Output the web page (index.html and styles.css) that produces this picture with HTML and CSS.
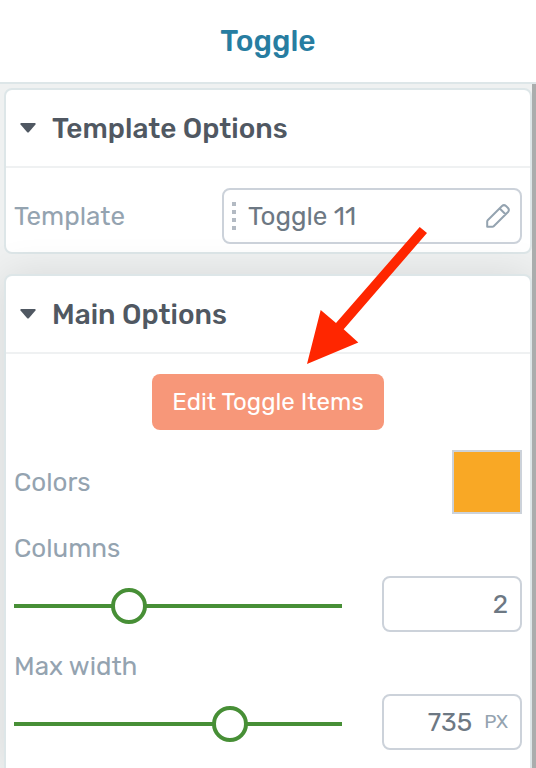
FILE: index.html
```html
<!DOCTYPE html>
<html lang="en">
<head>
    <meta charset="UTF-8">
    <meta name="viewport" content="width=device-width, initial-scale=1.0">
    <title>Toggle</title>
    <link rel="stylesheet" href="styles.css">
</head>
<body>
    <header class="header">
        <h1>Toggle</h1>
    </header>
    <div class="main">
        <div class="panel">
            <section class="card">
                <h2 class="card-head">
                    <svg class="caret" viewBox="0 0 16 10" aria-hidden="true"><path d="M1 0h14q1.200 .6 .5 1.600L9 9q-1 1-2 0L.5 1.600Q-.2.600 1 0z"/></svg>
                    Template Options
                </h2>
                <div class="card-body">
                    <div class="row">
                        <label for="template">Template</label>
                        <div class="field template-field">
                            <span class="handle"><i></i><i></i><i></i><i></i></span>
                            <input type="text" id="template" value="Toggle 11">
                            <button type="button" class="edit" aria-label="Edit template">
                                <svg viewBox="0 0 24 24"><path d="M1.200 22.800V17.600q0-.8.5-1.300L16 2q2-1.700 4 0l2 2q1.700 2 0 4L7.700 22.300q-.5.500-1.300.5zM13.700 4.500l5.800 5.800"/></svg>
                            </button>
                        </div>
                    </div>
                </div>
            </section>

            <section class="card card-main">
                <h2 class="card-head">
                    <svg class="caret" viewBox="0 0 16 10" aria-hidden="true"><path d="M1 0h14q1.200 .6 .5 1.600L9 9q-1 1-2 0L.5 1.600Q-.2.600 1 0z"/></svg>
                    Main Options
                </h2>
                <div class="card-body">
                    <button type="button" class="edit-items">Edit Toggle Items</button>
                    <div class="row">
                        <label for="color">Colors</label>
                        <input type="color" id="color" class="swatch" value="#f9a825">
                    </div>
                    <div class="option">
                        <label for="columns">Columns</label>
                        <div class="control">
                            <input type="range" class="slider" min="1" max="4" value="2" aria-label="Columns slider">
                            <div class="field number-field">
                                <input type="number" id="columns" value="2">
                            </div>
                        </div>
                    </div>
                    <div class="option">
                        <label for="maxwidth">Max width</label>
                        <div class="control">
                            <input type="range" class="slider" min="0" max="1085" value="735" aria-label="Max width slider">
                            <div class="field number-field">
                                <input type="number" id="maxwidth" value="735">
                                <span class="unit">PX</span>
                            </div>
                        </div>
                    </div>
                </div>
            </section>
        </div>
        <div class="scrollbar"></div>
    </div>
    <!-- arrow pointing at the edit button -->
    <svg class="arrow" viewBox="0 0 120 137" aria-hidden="true"><polygon points="112.700,0 120,6 36.700,102.300 51.300,115.600 0,137 13.700,83 29,96"/></svg>
</body>
</html>
```

FILE: styles.css
```css
* {
    box-sizing: border-box;
}

body {
    margin: 0;
    min-height: 100vh;
    display: flex;
    flex-direction: column;
    position: relative;
    font-family: Rubik, Roboto, sans-serif;
    font-size: 26px;
    color: #94a3b0;
    background-color: #eff1f1;
}

input,
button {
    font: inherit;
    margin: 0;
    padding: 0;
    border: none;
    background: none;
}

.header {
    height: 84px;
    display: flex;
    align-items: center;
    justify-content: center;
    background-color: #fff;
    border-bottom: 2px solid #dde6e8;
}

h1 {
    margin: 0;
    font-size: 30px;
    font-weight: 500;
    color: #277da1;
}

.main {
    flex: 1;
    display: flex;
}

.panel {
    flex: 1;
    display: flex;
    flex-direction: column;
    gap: 20px;
    padding: 4px 0 0 4px;
    overflow: hidden;
}

.scrollbar {
    width: 4px;
    background-color: #aaadad;
}

.card {
    background-color: #fff;
    border: 2px solid #dde6e8;
    border-radius: 8px;
}

/* last card runs down to the bottom of the window */
.card-main {
    flex: 1;
    position: relative;
    border-bottom: none;
    border-radius: 8px 8px 0 0;
    box-shadow: 0 0 40px rgba(0, 0, 0, 0.1);
}

.card-head {
    height: 78px;
    margin: 0;
    padding-left: 14px;
    display: flex;
    align-items: center;
    gap: 16px;
    font-size: 28px;
    font-weight: 500;
    color: #505862;
    border-bottom: 2px solid #eff1f2;
}

.caret {
    width: 16px;
    height: 10px;
    fill: #505862;
}

.card-body {
    display: flex;
    flex-direction: column;
    gap: 20px;
    padding: 20px 8px 8px;
}

.row {
    display: flex;
    align-items: center;
    justify-content: space-between;
}

.field {
    height: 56px;
    display: flex;
    align-items: center;
    border: 2px solid #ccd2da;
    border-radius: 8px;
    color: #6d7883;
}

.field input {
    flex: 1;
    min-width: 0;
    height: 100%;
    color: inherit;
}

.template-field {
    width: 300px;
    padding: 0 10px 0 8px;
}

.handle {
    display: flex;
    flex-direction: column;
    gap: 4px;
    margin-right: 12px;
}

.handle i {
    width: 4px;
    height: 4px;
    background-color: #b3bac3;
}

.edit {
    width: 24px;
    height: 24px;
    cursor: pointer;
}

.edit svg {
    display: block;
    fill: none;
    stroke: #94a3b0;
    stroke-width: 2;
    stroke-linejoin: round;
}

.edit-items {
    align-self: center;
    height: 56px;
    padding: 0 20px;
    font-size: 24px;
    color: #fff;
    background-color: #f79779;
    border-radius: 8px;
    cursor: pointer;
}

.swatch {
    width: 70px;
    height: 64px;
    border: 2px solid #ccd2da;
}

.swatch::-webkit-color-swatch-wrapper {
    padding: 0;
}

.swatch::-webkit-color-swatch {
    border: none;
    border-radius: 0;
}

.option {
    display: flex;
    flex-direction: column;
    gap: 12px;
    line-height: 30px;
}

.control {
    display: flex;
    align-items: center;
    gap: 40px;
}

.slider {
    flex: 1;
    min-width: 0;
    height: 36px;
    margin-top: 4px;
    appearance: none;
    -webkit-appearance: none;
}

.slider::-webkit-slider-runnable-track {
    height: 4px;
    background-color: #478f36;
}

.slider::-webkit-slider-thumb {
    -webkit-appearance: none;
    width: 36px;
    height: 36px;
    margin-top: -16px;
    border: 4px solid #478f36;
    border-radius: 50%;
    background-color: #fff;
}

.number-field {
    width: 140px;
    padding: 0 12px;
    gap: 12px;
}

.number-field input {
    text-align: right;
    appearance: textfield;
    -moz-appearance: textfield;
}

.number-field input::-webkit-inner-spin-button {
    -webkit-appearance: none;
    margin: 0;
}

.unit {
    font-size: 19px;
    color: #94a3b0;
}

.arrow {
    position: absolute;
    top: 227px;
    left: 307px;
    width: 120px;
    height: 137px;
    fill: #ff2600;
    pointer-events: none;
}
```
